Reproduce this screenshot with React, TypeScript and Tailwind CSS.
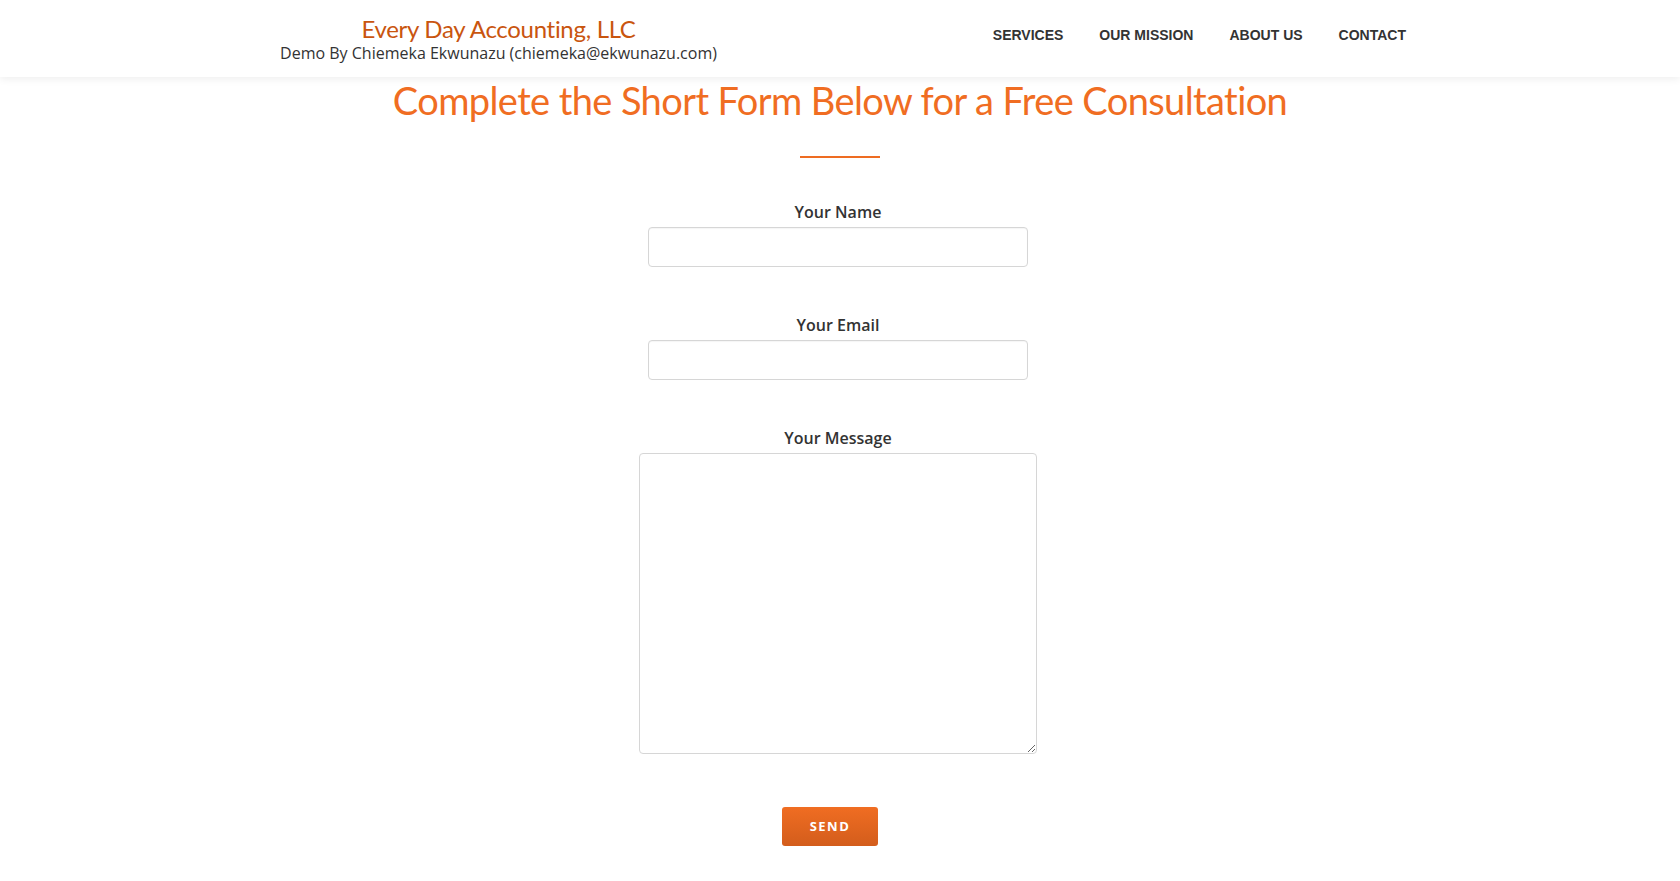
import React from 'react';

const navItems = ['Services', 'Our Mission', 'About Us', 'Contact'];

const Field: React.FC<{ label: string; top: string }> = ({ label, top }) => (
  <div className={`flex flex-col items-center ${top}`}>
    <label className="text-[16px] leading-[22px] font-semibold text-[#333]">{label}</label>
    <input
      type="text"
      className="mt-[4px] w-[380px] h-[40px] rounded-[4px] border border-[#d6d6d6] bg-white px-3 text-[14px] text-[#555] outline-none shadow-[inset_0_1px_1px_rgba(0,0,0,0.04)]"
    />
  </div>
);

export default function App() {
  return (
    <div className="min-h-[881px] bg-white font-['Open_Sans',sans-serif] text-[#333]">
      <header className="relative z-10 h-[77px] bg-white shadow-[0_2px_8px_rgba(0,0,0,0.07)]">
        <div className="mx-auto flex w-[1170px] justify-between">
          <div className="w-[487px] pt-[15px] text-center">
            <h1 className="font-['Lato',sans-serif] text-[24px] leading-[27px] tracking-[-0.3px] text-[#c9550f]">
              Every Day Accounting, LLC
            </h1>
            <p className="text-[16px] leading-[22px] text-[#333]">
              Demo By Chiemeka Ekwunazu (chiemeka@ekwunazu.com)
            </p>
          </div>
          <nav className="flex gap-[36px] pt-[25px] pr-[19px]">
            {navItems.map((item) => (
              <a
                key={item}
                href="#"
                className="font-['Liberation_Sans',sans-serif] text-[14px] leading-[20px] font-bold uppercase text-[#333]"
              >
                {item}
              </a>
            ))}
          </nav>
        </div>
      </header>

      <main className="flex flex-col items-center">
        <h2 className="font-['Lato',sans-serif] text-[38px] leading-[46px] text-[#f06d22] tracking-[-0.6px]">
          Complete the Short Form Below for a Free Consultation
        </h2>
        <div className="mt-[33px] h-[2px] w-[80px] bg-[#ee6c22]" />

        <form className="mr-[4px] flex flex-col items-center">
          <Field label="Your Name" top="mt-[43px]" />
          <Field label="Your Email" top="mt-[47px]" />
          <div className="mt-[47px] flex flex-col items-center">
            <label className="text-[16px] leading-[22px] font-semibold text-[#333]">Your Message</label>
            <textarea className="mt-[4px] w-[398px] h-[301px] rounded-[4px] border border-[#d6d6d6] bg-white p-3 text-[14px] outline-none" />
          </div>
          <button
            type="button"
            className="mt-[53px] mr-[16px] h-[39px] w-[96px] rounded-[3px] bg-gradient-to-b from-[#f06d22] to-[#d35d1c] text-[13px] font-bold tracking-[1.5px] text-white"
          >
            SEND
          </button>
        </form>
      </main>
    </div>
  );
}
